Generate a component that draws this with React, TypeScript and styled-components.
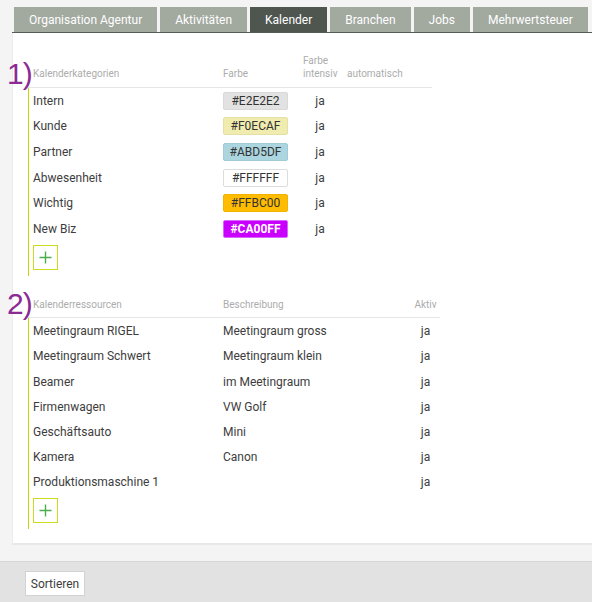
import React from "react";
import styled, { createGlobalStyle } from "styled-components";

const Global = createGlobalStyle`
  html, body { margin: 0; padding: 0; background: #f4f4f4; }
  body { font-family: Roboto, "Liberation Sans", Arial, sans-serif; overflow: hidden; }
  * { box-sizing: border-box; }
`;

const Page = styled.div`
  width: 592px;
  height: 602px;
  display: flex;
  flex-direction: column;
  overflow: hidden;
`;

const TabBar = styled.nav`
  display: flex;
  gap: 3px;
  margin: 7px 0 0 12px;
  padding-left: 2px;
  border-bottom: 1px solid #565c56;
`;

const Tab = styled.div<{ $active?: boolean }>`
  height: 25px;
  line-height: 26px;
  padding: 0 15px;
  font-size: 12px;
  color: #fff;
  white-space: nowrap;
  background: ${(p) => (p.$active ? "#4f5650" : "#a2a99f")};
`;

const Panel = styled.main`
  margin-left: 12px;
  background: #fff;
  border-left: 1px solid #ececec;
  box-shadow: 0 2px 0 #e8e8e8;
  padding: 21px 0 14px 15px;
  display: flex;
  flex-direction: column;
  gap: 21.5px;
`;

const Section = styled.section<{ $width: number }>`
  width: ${(p) => p.$width}px;
`;

const HeaderRow = styled.div<{ $cols: string }>`
  position: relative;
  display: grid;
  grid-template-columns: ${(p) => p.$cols};
  align-items: end;
  padding-bottom: 6.5px;
  border-bottom: 1px solid #e6e6e6;
  font-size: 10px;
  line-height: 13px;
  color: #acacac;
`;

const Marker = styled.span`
  position: absolute;
  left: -21px;
  bottom: -1px;
  font-size: 30px;
  line-height: 29px;
  color: #8c2a93;
  font-family: "Liberation Sans", Arial, sans-serif;
  font-weight: 400;
  letter-spacing: -1px;
`;

const HeadCell = styled.div<{ $align?: string }>`
  padding-left: ${(p) => (p.$align === "center" ? "0" : "5px")};
  text-align: ${(p) => p.$align || "left"};
`;

const Body = styled.div`
  border-left: 1px solid #c9d300;
  padding-bottom: 6.5px;
`;

const Row = styled.div<{ $cols: string; $h: number }>`
  display: grid;
  grid-template-columns: ${(p) => p.$cols};
  align-items: center;
  height: ${(p) => p.$h}px;
  font-size: 12px;
  color: #3d3d3d;
  margin-left: -1px;
  padding-top: 1px;
`;

const Cell = styled.div<{ $align?: string }>`
  padding-left: ${(p) => (p.$align === "center" ? "0" : "5px")};
  text-align: ${(p) => p.$align || "left"};
  white-space: nowrap;
`;

const Swatch = styled.div<{ $bg: string; $fg: string; $bold?: boolean; $border: string }>`
  width: 65px;
  height: 18px;
  line-height: 16px;
  border-radius: 2px;
  border: 1px solid ${(p) => p.$border};
  background: ${(p) => p.$bg};
  color: ${(p) => p.$fg};
  font-weight: ${(p) => (p.$bold ? 700 : 400)};
  text-align: center;
  font-size: 12px;
`;

const AddButton = styled.button`
  display: flex;
  align-items: center;
  justify-content: center;
  width: 25px;
  height: 25px;
  margin: 3.5px 0 0 4px;
  padding: 0;
  background: #fff;
  border: 1px solid #cbdb1e;
  cursor: pointer;
`;

const Spacer = styled.div`
  flex: 1;
`;

const Footer = styled.footer`
  height: 41px;
  background: #e2e2e2;
  border-top: 1px solid #d6d6d6;
  padding: 9px 0 0 25px;
`;

const FooterButton = styled.button`
  height: 25px;
  width: 60px;
  padding: 0;
  background: #fff;
  border: 1px solid #d2d2d2;
  font-family: Roboto, "Liberation Sans", Arial, sans-serif;
  font-size: 12px;
  color: #3d3d3d;
`;

const Plus = () => (
  <svg width="13" height="13" viewBox="0 0 13 13">
    <path d="M6.5 0.5v12M0.5 6.5h12" stroke="#4cae4c" strokeWidth="1.4" fill="none" />
  </svg>
);

const tabs = ["Organisation Agentur", "Aktivitäten", "Kalender", "Branchen", "Jobs", "Mehrwertsteuer"];

const cats = [
  { name: "Intern", hex: "#E2E2E2", border: "#d9d9d9", fg: "#333" },
  { name: "Kunde", hex: "#F0ECAF", border: "#e4e0a4", fg: "#333" },
  { name: "Partner", hex: "#ABD5DF", border: "#a0cbd6", fg: "#333" },
  { name: "Abwesenheit", hex: "#FFFFFF", border: "#dcdcdc", fg: "#333" },
  { name: "Wichtig", hex: "#FFBC00", border: "#f2b300", fg: "#333" },
  { name: "New Biz", hex: "#CA00FF", border: "#d866ff", fg: "#fff", bold: true },
];

const resources = [
  ["Meetingraum RIGEL", "Meetingraum gross"],
  ["Meetingraum Schwert", "Meetingraum klein"],
  ["Beamer", "im Meetingraum"],
  ["Firmenwagen", "VW Golf"],
  ["Geschäftsauto", "Mini"],
  ["Kamera", "Canon"],
  ["Produktionsmaschine 1", ""],
];

const cols1 = "190px 80px 44px 90px";
const cols2 = "190px 193px 29px";

export default function App() {
  return (
    <Page>
      <Global />
      <TabBar>
        {tabs.map((t) => (
          <Tab key={t} $active={t === "Kalender"}>
            {t}
          </Tab>
        ))}
      </TabBar>
      <Panel>
        <Section $width={404}>
          <HeaderRow $cols={cols1}>
            <Marker>1)</Marker>
            <HeadCell>Kalenderkategorien</HeadCell>
            <HeadCell>Farbe</HeadCell>
            <HeadCell>
              Farbe
              <br />
              intensiv
            </HeadCell>
            <HeadCell>automatisch</HeadCell>
          </HeaderRow>
          <Body>
            {cats.map((c) => (
              <Row key={c.name} $cols={cols1} $h={25.6}>
                <Cell>{c.name}</Cell>
                <Cell>
                  <Swatch $bg={c.hex} $fg={c.fg} $bold={c.bold} $border={c.border}>
                    {c.hex}
                  </Swatch>
                </Cell>
                <Cell $align="center">ja</Cell>
                <Cell />
              </Row>
            ))}
            <AddButton aria-label="Kategorie hinzufügen">
              <Plus />
            </AddButton>
          </Body>
        </Section>
        <Section $width={412}>
          <HeaderRow $cols={cols2}>
            <Marker>2)</Marker>
            <HeadCell>Kalenderressourcen</HeadCell>
            <HeadCell>Beschreibung</HeadCell>
            <HeadCell $align="center">Aktiv</HeadCell>
          </HeaderRow>
          <Body>
            {resources.map(([n, d]) => (
              <Row key={n} $cols={cols2} $h={25.2}>
                <Cell>{n}</Cell>
                <Cell>{d}</Cell>
                <Cell $align="center">ja</Cell>
              </Row>
            ))}
            <AddButton aria-label="Ressource hinzufügen">
              <Plus />
            </AddButton>
          </Body>
        </Section>
      </Panel>
      <Spacer />
      <Footer>
        <FooterButton>Sortieren</FooterButton>
      </Footer>
    </Page>
  );
}
